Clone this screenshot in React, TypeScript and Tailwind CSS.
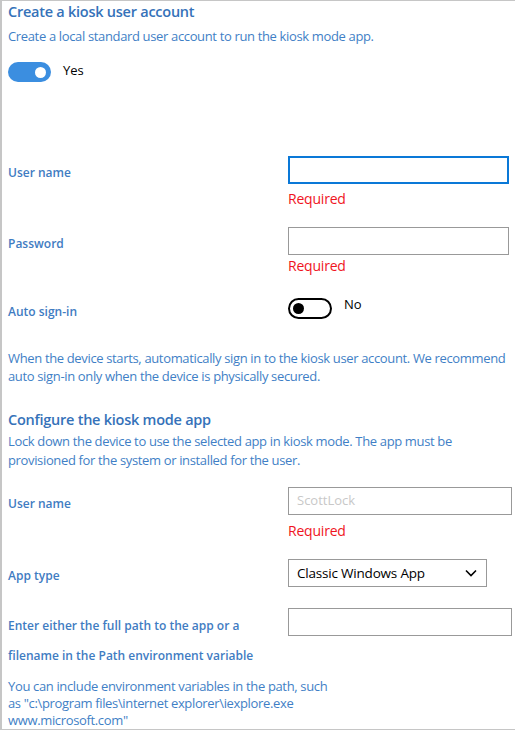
import { FC } from "react";

const Toggle: FC<{ on: boolean }> = ({ on }) =>
  on ? (
    <div className="w-[43px] h-[20px] rounded-full bg-[#3b8ee0] flex items-center justify-end px-[5px]">
      <div className="w-[11px] h-[11px] rounded-full bg-white" />
    </div>
  ) : (
    <div className="w-[44px] h-[21px] rounded-full border-2 border-black bg-white flex items-center px-[3px]">
      <div className="w-[11px] h-[11px] rounded-full bg-black" />
    </div>
  );

const Required: FC<{ className?: string }> = ({ className = "" }) => (
  <div className={`pl-[280px] text-[14px] leading-[20px] tracking-[-0.2px] text-[#f0141e] ${className}`}>
    Required
  </div>
);

const Label: FC<{ children: React.ReactNode }> = ({ children }) => (
  <div className="pt-[5px] text-[12px] font-semibold text-[#3f7cc2]">{children}</div>
);

const App: FC = () => {
  return (
    <div
      className="w-[515px] h-[730px] bg-white border-t border-b border-l-2 border-[#c6c6c6] pl-[6px] overflow-hidden text-[#3f7fc6]"
      style={{ fontFamily: '"Open Sans", "Noto Sans", sans-serif' }}
    >
      <h2 className="mt-[1px] text-[14.5px] leading-[20px] font-semibold tracking-[-0.25px] text-[#3572b9]">
        Create a kiosk user account
      </h2>
      <p className="mt-[4px] text-[13px] leading-[20px] tracking-[-0.35px]">
        Create a local standard user account to run the kiosk mode app.
      </p>
      <div className="mt-[16px] flex items-start gap-[12px]">
        <Toggle on />
        <span className="text-[13px] leading-[16px] text-black">Yes</span>
      </div>

      <div className="mt-[74px] grid grid-cols-[280px_221px] items-center h-[28px]">
        <Label>User name</Label>
        <div className="h-[28px] border-2 border-[#0a78d7] bg-white" />
      </div>
      <Required className="mt-[5px]" />

      <div className="mt-[18px] grid grid-cols-[280px_221px] items-center h-[28px]">
        <Label>Password</Label>
        <div className="h-[28px] border border-[#999999] bg-white" />
      </div>
      <Required className="mt-[1px]" />

      <div className="mt-[22px] grid grid-cols-[280px_1fr] h-[22px]">
        <Label>Auto sign-in</Label>
        <div className="flex items-start gap-[12px]">
          <Toggle on={false} />
          <span className="text-[13px] leading-[13px] text-black">No</span>
        </div>
      </div>

      <p className="mt-[29px] text-[13px] leading-[18px] tracking-[-0.35px] pr-[2px]">
        When the device starts, automatically sign in to the kiosk user account. We recommend
        auto sign-in only when the device is physically secured.
      </p>

      <h2 className="mt-[25px] text-[14.5px] leading-[20px] font-semibold tracking-[-0.25px] text-[#3572b9]">
        Configure the kiosk mode app
      </h2>
      <p className="mt-[2px] text-[13px] leading-[19px] tracking-[-0.35px] max-w-[465px]">
        Lock down the device to use the selected app in kiosk mode. The app must be provisioned
        for the system or installed for the user.
      </p>

      <div className="mt-[17px] grid grid-cols-[280px_224px] items-center h-[28px]">
        <Label>User name</Label>
        <div className="h-[28px] border border-[#999999] bg-white flex items-center px-[8px] text-[13px] text-[#c8c8c8]">
          ScottLock
        </div>
      </div>
      <Required className="mt-[6px]" />

      <div className="mt-[18px] grid grid-cols-[280px_199px] items-center h-[28px]">
        <Label>App type</Label>
        <div className="h-[28px] border border-[#999999] bg-white flex items-center justify-between pl-[8px] pr-[9px] text-[13.5px] tracking-[-0.2px] text-black">
          <span>Classic Windows App</span>
          <svg width="12" height="8" viewBox="0 0 12 8" fill="none">
            <path d="M1 1.5 L6 6.5 L11 1.5" stroke="black" strokeWidth="1.6" />
          </svg>
        </div>
      </div>

      <div className="mt-[21px] grid grid-cols-[280px_224px] items-start">
        <div className="pt-[3px] text-[12px] leading-[30px] font-semibold text-[#3f7cc2] w-[260px]">
          Enter either the full path to the app or a filename in the Path environment variable
        </div>
        <div className="h-[28px] border border-[#999999] bg-white" />
      </div>

      <p className="mt-[7px] text-[13px] leading-[17px] tracking-[-0.35px] max-w-[325px]">
        You can include environment variables in the path, such as
        "c:\program files\internet explorer\iexplore.exe www.microsoft.com"
      </p>
    </div>
  );
};

export default App;
